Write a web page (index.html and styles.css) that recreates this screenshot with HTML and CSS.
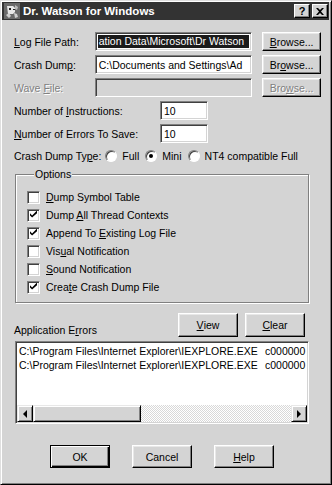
FILE: index.html
```html
<!DOCTYPE html>
<html lang="en">

<head>
    <meta charset="UTF-8">
    <meta name="viewport" content="width=device-width, initial-scale=1.0">
    <title>Dr. Watson for Windows</title>
    <link rel="stylesheet" href="styles.css">
</head>

<body>
    <div class="window">
        <div class="titlebar">
            <svg class="app-icon" width="16" height="16" viewBox="0 0 16 16">
                <rect x="0" y="0" width="16" height="16" fill="#6a6a6a" />
                <path d="M3 3h6l2 2v4l-2 2H4z" fill="#e8e8e8" />
                <path d="M5 5h2v2H5zM9 6h2v1H9z" fill="#222" />
                <path d="M2 12l3-2 2 3-2 2zM10 10l3 1 1 3-3 1z" fill="#d0d0d0" />
                <path d="M11 2l3 2-1 3-2-1z" fill="#bbb" />
            </svg>
            <span class="title">Dr. Watson for Windows</span>
            <div class="title-buttons">
                <span class="tbtn">?</span>
                <span class="tbtn">
                    <svg width="8" height="7" viewBox="0 0 8 7">
                        <path d="M0 0h2l2 2 2-2h2L5 3.5 8 7H6L4 5 2 7H0l3-3.5z" fill="#000" />
                    </svg>
                </span>
            </div>
        </div>

        <div class="content">
            <div class="row">
                <span class="lbl"><u>L</u>og File Path:</span>
                <div class="field path"><span class="selected">ation Data\Microsoft\Dr Watson</span></div>
                <span class="btn browse"><u>B</u>rowse...</span>
            </div>
            <div class="row">
                <span class="lbl">Crash Dum<u>p</u>:</span>
                <div class="field path">C:\Documents and Settings\Ad</div>
                <span class="btn browse">Br<u>o</u>wse...</span>
            </div>
            <div class="row">
                <span class="lbl disabled">Wave <u>F</u>ile:</span>
                <div class="field path off"></div>
                <span class="btn browse disabled">Bro<u>w</u>se...</span>
            </div>
            <div class="row">
                <span class="lbl wide">Number of <u>I</u>nstructions:</span>
                <div class="field num">10</div>
            </div>
            <div class="row">
                <span class="lbl wide"><u>N</u>umber of Errors To Save:</span>
                <div class="field num">10</div>
            </div>

            <div class="radio-row">
                <span>Crash Dump Ty<u>p</u>e:</span>
                <span class="radio"></span><span class="radio-text">Full</span>
                <span class="radio on"><span class="dot"></span></span><span class="radio-text">Mini</span>
                <span class="radio"></span><span class="radio-text">NT4 compatible Full</span>
            </div>

            <fieldset class="options">
                <legend>Options</legend>
                <div class="check-row"><span class="checkbox"></span><span><u>D</u>ump Symbol Table</span></div>
                <div class="check-row"><span class="checkbox on"></span><span>Dump <u>A</u>ll Thread Contexts</span></div>
                <div class="check-row"><span class="checkbox on"></span><span>Append To <u>E</u>xisting Log File</span></div>
                <div class="check-row"><span class="checkbox"></span><span>Vis<u>u</u>al Notification</span></div>
                <div class="check-row"><span class="checkbox"></span><span><u>S</u>ound Notification</span></div>
                <div class="check-row"><span class="checkbox on"></span><span>Crea<u>t</u>e Crash Dump File</span></div>
            </fieldset>

            <div class="errors-head">
                <span class="errors-label">Application E<u>r</u>rors</span>
                <span class="btn small"><u>V</u>iew</span>
                <span class="btn small"><u>C</u>lear</span>
            </div>

            <div class="listbox">
                <div class="list-items">
                    <div class="list-item"><span class="exe">C:\Program Files\Internet Explorer\IEXPLORE.EXE</span><span>c000000</span></div>
                    <div class="list-item"><span class="exe">C:\Program Files\Internet Explorer\IEXPLORE.EXE</span><span>c000000</span></div>
                </div>
                <div class="hscroll">
                    <span class="sb-btn"><span class="arrow-left"></span></span>
                    <span class="sb-thumb"></span>
                    <span class="sb-track"></span>
                    <span class="sb-btn"><span class="arrow-right"></span></span>
                </div>
            </div>

            <div class="dialog-buttons">
                <span class="btn big default">OK</span>
                <span class="btn big">Cancel</span>
                <span class="btn big"><u>H</u>elp</span>
            </div>
        </div>
    </div>
</body>

</html>
```

FILE: styles.css
```css
* {
    margin: 0;
    padding: 0;
    box-sizing: border-box;
}

body {
    background: #d4d4d4;
    font-family: "Liberation Sans", Arial, sans-serif;
    font-size: 10.5px;
    color: #000;
}

u {
    text-decoration: underline;
    text-underline-offset: 1px;
}

.window {
    width: 332px;
    height: 485px;
    background: #d4d4d4;
    border: 1px solid;
    border-color: #dfdfdf #000 #000 #dfdfdf;
    box-shadow: inset 1px 1px #fff, inset -1px -1px #808080;
    padding: 1px 2px 2px 1px;
}

/* title bar */
.titlebar {
    height: 18px;
    background: #333;
    color: #fff;
    display: flex;
    align-items: center;
    padding: 0 1px 0 2px;
}

.app-icon {
    margin-right: 3px;
}

.title {
    flex: 1;
    font-weight: bold;
    font-size: 11.5px;
}

.title-buttons {
    display: flex;
    gap: 2px;
}

.tbtn {
    width: 16px;
    height: 14px;
    background: #d4d4d4;
    color: #000;
    border: 1px solid;
    border-color: #fff #000 #000 #fff;
    box-shadow: inset -1px -1px #808080;
    display: flex;
    align-items: center;
    justify-content: center;
    font-weight: bold;
    font-size: 11px;
}

/* dialog body */
.content {
    padding: 12px 8px 0 12px;
}

.row {
    display: flex;
    align-items: center;
    height: 19px;
    margin-bottom: 4px;
}

.lbl {
    width: 81px;
}

.lbl.wide {
    width: 146px;
}

.disabled {
    color: #808080;
    text-shadow: 1px 1px 0 #fff;
}

.field {
    height: 19px;
    background: #fff;
    border: 1px solid;
    border-color: #808080 #fff #fff #808080;
    box-shadow: inset 1px 1px #404040, inset -1px -1px #d4d4d4;
    padding: 0 3px;
    display: flex;
    align-items: center;
    white-space: nowrap;
    overflow: hidden;
}

.field.path {
    width: 158px;
}

.field.num {
    width: 48px;
}

.field.off {
    background: #d4d4d4;
}

.selected {
    flex: 1;
    background: #1a1a1a;
    color: #fff;
    line-height: 13px;
    margin: 0 -1px;
    padding: 0 1px;
}

.btn {
    display: flex;
    align-items: center;
    justify-content: center;
    background: #d4d4d4;
    border: 1px solid;
    border-color: #fff #000 #000 #fff;
    box-shadow: inset -1px -1px #808080, inset 1px 1px #e8e8e8;
}

.browse {
    width: 59px;
    height: 19px;
    margin-left: 10px;
}

/* radios */
.radio-row {
    display: flex;
    align-items: center;
    height: 17px;
    margin-bottom: 4px;
}

.radio {
    width: 12px;
    height: 12px;
    border-radius: 50%;
    background: #fff;
    border: 1px solid;
    border-color: #808080 #fff #fff #808080;
    box-shadow: inset 1px 1px #404040;
    display: flex;
    align-items: center;
    justify-content: center;
    margin-left: 4px;
}

.radio .dot {
    width: 4px;
    height: 4px;
    border-radius: 50%;
    background: #000;
}

.radio-text {
    margin-left: 5px;
    margin-right: 2px;
}

/* options group */
.options {
    margin-left: 1px;
    width: 294px;
    border: 1px solid #808080;
    box-shadow: 1px 1px 0 #fff, inset 1px 1px 0 #fff;
    padding: 7px 0 6px 11px;
}

.options legend {
    margin-left: 7px;
    padding: 0 1px;
    line-height: 13px;
    background: #d4d4d4;
}

.check-row {
    display: flex;
    align-items: center;
    height: 18px;
}

.checkbox {
    width: 13px;
    height: 13px;
    background: #fff;
    border: 1px solid;
    border-color: #808080 #fff #fff #808080;
    box-shadow: inset 1px 1px #404040, inset -1px -1px #d4d4d4;
    margin-right: 6px;
    position: relative;
}

.checkbox.on::after {
    content: "";
    position: absolute;
    left: 2px;
    top: 1px;
    width: 7px;
    height: 7px;
    background: linear-gradient(#000, #000);
    clip-path: polygon(0 40%, 30% 70%, 100% 0, 100% 40%, 30% 100%, 0 70%);
}

/* errors */
.errors-head {
    display: flex;
    align-items: flex-end;
    width: 291px;
    height: 24px;
    margin-top: 10px;
}

.errors-label {
    flex: 1;
    line-height: 13px;
}

.btn.small {
    width: 60px;
    height: 24px;
    margin-left: 7px;
}

.listbox {
    margin: 4px 0 0 1px;
    width: 294px;
    height: 83px;
    background: #fff;
    border: 1px solid;
    border-color: #808080 #fff #fff #808080;
    box-shadow: inset 1px 1px #404040, inset -1px -1px #d4d4d4;
    padding: 1px;
    display: flex;
    flex-direction: column;
}

.list-items {
    flex: 1;
    overflow: hidden;
    padding: 1px 0 0 2px;
}

.list-item {
    display: flex;
    line-height: 14px;
    white-space: nowrap;
}

.exe {
    flex: none;
    width: 246px;
}

.hscroll {
    display: flex;
    height: 17px;
}

.sb-btn {
    width: 16px;
    background: #d4d4d4;
    border: 1px solid;
    border-color: #e8e8e8 #000 #000 #e8e8e8;
    box-shadow: inset 1px 1px #fff, inset -1px -1px #808080;
    display: flex;
    align-items: center;
    justify-content: center;
}

.sb-thumb {
    width: 108px;
    background: #d4d4d4;
    border: 1px solid;
    border-color: #e8e8e8 #000 #000 #e8e8e8;
    box-shadow: inset 1px 1px #fff, inset -1px -1px #808080;
}

.sb-track {
    flex: 1;
    background: repeating-conic-gradient(#fff 0 25%, #d8d8d8 0 50%) 0 0 / 2px 2px;
}

.arrow-left {
    border-top: 4px solid transparent;
    border-bottom: 4px solid transparent;
    border-right: 4px solid #000;
}

.arrow-right {
    border-top: 4px solid transparent;
    border-bottom: 4px solid transparent;
    border-left: 4px solid #000;
}

/* bottom buttons */
.dialog-buttons {
    display: flex;
    gap: 22px;
    margin-top: 21px;
    padding-left: 36px;
}

.btn.big {
    width: 60px;
    height: 23px;
}

.btn.default {
    border-color: #000;
    box-shadow: inset 1px 1px #fff, inset -1px -1px #000, inset -2px -2px #808080;
}
```
